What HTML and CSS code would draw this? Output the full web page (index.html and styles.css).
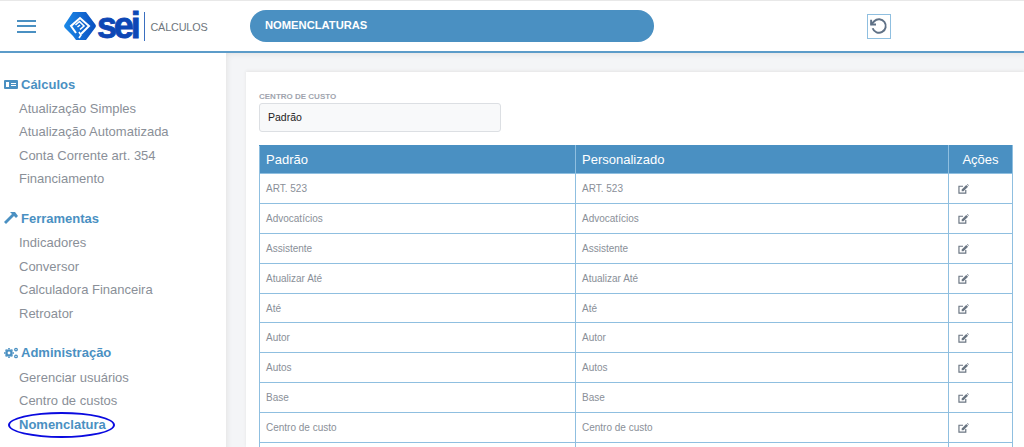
FILE: index.html
```html
<!DOCTYPE html>
<html lang="pt-BR">
<head>
<meta charset="utf-8">
<title>SEI Cálculos</title>
<link rel="stylesheet" href="styles.css">
</head>
<body>
<header class="topbar">
  <button class="menu-btn" aria-label="Menu"><span></span><span></span><span></span></button>
  <div class="logo">
    <svg class="logo-mark" viewBox="0 0 32 30" width="32" height="30">
      <defs><linearGradient id="lm" x1="0" x2="1" y1="0" y2="0"><stop offset="0" stop-color="#1b8ae8"/><stop offset="1" stop-color="#0c4fc0"/></linearGradient></defs>
      <path fill="url(#lm)" d="M9 1h13l9 12a3 3 0 0 1 0 4l-9 12H12l-3-4-8-8a3 3 0 0 1 0-4z"/>
      <path fill="none" stroke="#fff" stroke-width="2" d="M12 22l-5-7 9-8 9 8-8 8"/>
      <path fill="none" stroke="#fff" stroke-width="1.6" d="M11.5 14l4-3.5 4.500 4.500-4 3.500M13.500 16l2.500-2M15 21l2 3-2 3"/>
    </svg>
    <span class="logo-word">sei</span>
    <span class="logo-sep"></span>
    <span class="logo-sub">CÁLCULOS</span>
  </div>
  <div class="page-pill">NOMENCLATURAS</div>
  <button class="undo-btn" aria-label="Desfazer">
    <svg viewBox="0 0 24 24" width="18" height="18" fill="none" stroke="#5f7186" stroke-width="2.6">
      <path d="M1.500 3.500v6.500h6.500"/>
      <path d="M3.510 15a9 9 0 1 0 2.130-9.360L1.500 10"/>
    </svg>
  </button>
</header>
<div class="layout">
  <nav class="sidebar">
    <section class="nav-group">
      <h2 class="nav-title">
        <svg class="nav-icon" viewBox="0 0 14 11" width="14" height="11"><path fill="#4a90c2" fill-rule="evenodd" d="M1 1h12a1 1 0 0 1 1 1v7a1 1 0 0 1-1 1H1a1 1 0 0 1-1-1V2a1 1 0 0 1 1-1zm1 2v5h3V3zm5 1v1h5V4zm0 2v1h5V6z"/></svg>
        Cálculos
      </h2>
      <a class="nav-link">Atualização Simples</a>
      <a class="nav-link">Atualização Automatizada</a>
      <a class="nav-link">Conta Corrente art. 354</a>
      <a class="nav-link">Financiamento</a>
    </section>
    <section class="nav-group">
      <h2 class="nav-title">
        <svg class="nav-icon" viewBox="0 0 14 14" width="14" height="14"><path fill="#4a90c2" d="M6 1h5l3 4-2 2-2-2-8 8-2-2 8-8z"/></svg>
        Ferramentas
      </h2>
      <a class="nav-link">Indicadores</a>
      <a class="nav-link">Conversor</a>
      <a class="nav-link">Calculadora Financeira</a>
      <a class="nav-link">Retroator</a>
    </section>
    <section class="nav-group">
      <h2 class="nav-title">
        <svg class="nav-icon" viewBox="0 0 14 12" width="14" height="12" fill="none" stroke="#4a90c2"><circle cx="5" cy="6" r="2.6" stroke-width="2.4"/><path d="M5 1v1M5 10v1M0 6h1M9 6h1M1.6 2.6l.8.8M7.6 8.6l.8.8M1.6 9.4l.8-.8M7.6 3.4l.8-.8" stroke-width="1.6"/><circle cx="12" cy="2.6" r="1.3" stroke-width="1.3"/><circle cx="12" cy="9.4" r="1.3" stroke-width="1.3"/></svg>
        Administração
      </h2>
      <a class="nav-link">Gerenciar usuários</a>
      <a class="nav-link">Centro de custos</a>
      <a class="nav-link active">Nomenclatura</a>
    </section>
    <span class="highlight-ring"></span>
  </nav>
  <main class="content">
    <div class="card">
      <label class="field-label">CENTRO DE CUSTO</label>
      <div class="select-box">Padrão</div>
      <table class="names">
        <thead>
          <tr><th class="col-a">Padrão</th><th class="col-b">Personalizado</th><th class="col-c">Ações</th></tr>
        </thead>
        <tbody id="rows">
          <tr><td>ART. 523</td><td>ART. 523</td><td class="act"><svg class="edit" viewBox="0 0 12 11" width="11" height="10"><path fill="none" stroke="#6b7683" stroke-width="1.3" d="M8.5 6.5V10H1V2.500h4.500"/><path fill="#6b7683" d="M4 6l5-5 2 2-5 5H4zM9.800.4l.6-.4 1.400 1.400-.5.7z"/></svg></td></tr>
          <tr><td>Advocatícios</td><td>Advocatícios</td><td class="act"><svg class="edit" viewBox="0 0 12 11" width="11" height="10"><path fill="none" stroke="#6b7683" stroke-width="1.3" d="M8.5 6.5V10H1V2.500h4.500"/><path fill="#6b7683" d="M4 6l5-5 2 2-5 5H4zM9.800.4l.6-.4 1.400 1.400-.5.7z"/></svg></td></tr>
          <tr><td>Assistente</td><td>Assistente</td><td class="act"><svg class="edit" viewBox="0 0 12 11" width="11" height="10"><path fill="none" stroke="#6b7683" stroke-width="1.3" d="M8.5 6.5V10H1V2.500h4.500"/><path fill="#6b7683" d="M4 6l5-5 2 2-5 5H4zM9.800.4l.6-.4 1.400 1.400-.5.7z"/></svg></td></tr>
          <tr><td>Atualizar Até</td><td>Atualizar Até</td><td class="act"><svg class="edit" viewBox="0 0 12 11" width="11" height="10"><path fill="none" stroke="#6b7683" stroke-width="1.3" d="M8.5 6.5V10H1V2.500h4.500"/><path fill="#6b7683" d="M4 6l5-5 2 2-5 5H4zM9.800.4l.6-.4 1.400 1.400-.5.7z"/></svg></td></tr>
          <tr><td>Até</td><td>Até</td><td class="act"><svg class="edit" viewBox="0 0 12 11" width="11" height="10"><path fill="none" stroke="#6b7683" stroke-width="1.3" d="M8.5 6.5V10H1V2.500h4.500"/><path fill="#6b7683" d="M4 6l5-5 2 2-5 5H4zM9.800.4l.6-.4 1.400 1.400-.5.7z"/></svg></td></tr>
          <tr><td>Autor</td><td>Autor</td><td class="act"><svg class="edit" viewBox="0 0 12 11" width="11" height="10"><path fill="none" stroke="#6b7683" stroke-width="1.3" d="M8.5 6.5V10H1V2.500h4.500"/><path fill="#6b7683" d="M4 6l5-5 2 2-5 5H4zM9.800.4l.6-.4 1.400 1.400-.5.7z"/></svg></td></tr>
          <tr><td>Autos</td><td>Autos</td><td class="act"><svg class="edit" viewBox="0 0 12 11" width="11" height="10"><path fill="none" stroke="#6b7683" stroke-width="1.3" d="M8.5 6.5V10H1V2.500h4.500"/><path fill="#6b7683" d="M4 6l5-5 2 2-5 5H4zM9.800.4l.6-.4 1.400 1.400-.5.7z"/></svg></td></tr>
          <tr><td>Base</td><td>Base</td><td class="act"><svg class="edit" viewBox="0 0 12 11" width="11" height="10"><path fill="none" stroke="#6b7683" stroke-width="1.3" d="M8.5 6.5V10H1V2.500h4.500"/><path fill="#6b7683" d="M4 6l5-5 2 2-5 5H4zM9.800.4l.6-.4 1.400 1.400-.5.7z"/></svg></td></tr>
          <tr><td>Centro de custo</td><td>Centro de custo</td><td class="act"><svg class="edit" viewBox="0 0 12 11" width="11" height="10"><path fill="none" stroke="#6b7683" stroke-width="1.3" d="M8.5 6.5V10H1V2.500h4.500"/><path fill="#6b7683" d="M4 6l5-5 2 2-5 5H4zM9.800.4l.6-.4 1.400 1.400-.5.7z"/></svg></td></tr>
          <tr><td>&nbsp;</td><td>&nbsp;</td><td></td></tr>
        </tbody>
      </table>
    </div>
  </main>
</div>
</body>
</html>
```
FILE: styles.css
```css
* { box-sizing: border-box; }
html, body { margin: 0; height: 447px; overflow: hidden; }
body { font-family: "Liberation Sans", Arial, sans-serif; background: #fff; color: #8a8f98; }
.topbar {
  height: 53px; display: flex; align-items: center; background: #fff;
  border-top: 1px solid #e8e8e8; border-bottom: 2px solid #5c9cc9;
}
.menu-btn {
  width: 19px; height: 13px; margin-left: 17px; padding: 0; border: 0; background: none;
  display: flex; flex-direction: column; justify-content: space-between;
}
.menu-btn span { display: block; height: 2px; background: #4a90c2; }
.logo { display: flex; align-items: center; margin-left: 28px; width: 143px; height: 32px; }
.logo > * { flex: none; }
.logo-word {
  font-weight: 700; font-size: 36px; line-height: 30px;
  color: #0d47b5; letter-spacing: -3.2px; margin-left: 1px; -webkit-text-stroke: .8px #0d47b5;
}
.logo-sep { width: 1px; height: 29px; background: #3a6fc0; margin-left: 7px; }
.logo-sub { font-size: 10.8px; color: #6e757c; margin-left: 5px; padding-top: 2px; letter-spacing: -.15px; }
.page-pill {
  width: 404px; height: 32px; margin-left: 43px; padding: 0 15px; border-radius: 16px;
  background: #4a90c2; color: #fff; font-size: 11.2px; font-weight: 700; line-height: 30px;
}
.undo-btn {
  width: 24px; height: 25px; margin-left: 213px; padding: 0; border: 1px solid #8fbfe0; border-radius: 0; background: #fff;
  display: flex; align-items: center; justify-content: center;
}
.layout { display: flex; height: 394px; }
.sidebar { position: relative; width: 226px; flex: none; background: #fff; padding-top: 21px; }
.nav-group { margin-bottom: 17.5px; }
.nav-title {
  display: flex; align-items: center; gap: 3px; margin: 0 0 2.6px; padding-left: 4px; height: 20px;
  font-size: 13px; font-weight: 700; color: #4a90c2;
}
.nav-icon { flex: none; }
.nav-link { display: block; height: 23.6px; line-height: 23.6px; padding-left: 19px; font-size: 13px; color: #8a8f98; }
.nav-link.active { font-weight: 700; color: #4a90c2; }
.highlight-ring {
  position: absolute; left: 8px; top: 359px; width: 107px; height: 26px;
  border: 2px solid #0a0adf; border-radius: 50%;
}
.content {
  flex: 1; min-width: 0; padding: 19px 0 0 20px; background: #f4f5f7; overflow: hidden;
  box-shadow: inset 4px 4px 6px -4px #dcdcdc;
}
.card {
  background: #fff; height: 375px; padding: 19px 11px 0 13px; overflow: hidden;
  box-shadow: 0 -1px 3px #e4e4e4;
}
.field-label { display: block; font-size: 8px; font-weight: 700; line-height: 11px; color: #a0a4ae; }
.select-box {
  width: 242px; height: 29px; margin-top: 1px; padding-left: 8px; line-height: 27px;
  background: #f8f9fa; border: 1px solid #dcdfe3; border-radius: 3px; color: #222; font-size: 10.5px;
}
.names { width: 753px; margin-top: 13px; border-collapse: collapse; table-layout: fixed; }
.names th {
  height: 28px; background: #4a90c2; color: #fff; font-weight: 400; font-size: 13px;
  text-align: left; padding: 0 6px; border: 1px solid #8fbfe0; border-top-color: #4a90c2;
}
.names th.col-a { width: 316px; }
.names th.col-b { width: 373px; }
.names th.col-c { width: 64px; text-align: center; }
.names td {
  height: 29.9px; padding: 0 6px; font-size: 10px; color: #8a8f98;
  border: 1px solid #8fbfe0;
}
.names td.act { padding-left: 9px; }
.edit { display: block; margin-top: 1px; }
```
